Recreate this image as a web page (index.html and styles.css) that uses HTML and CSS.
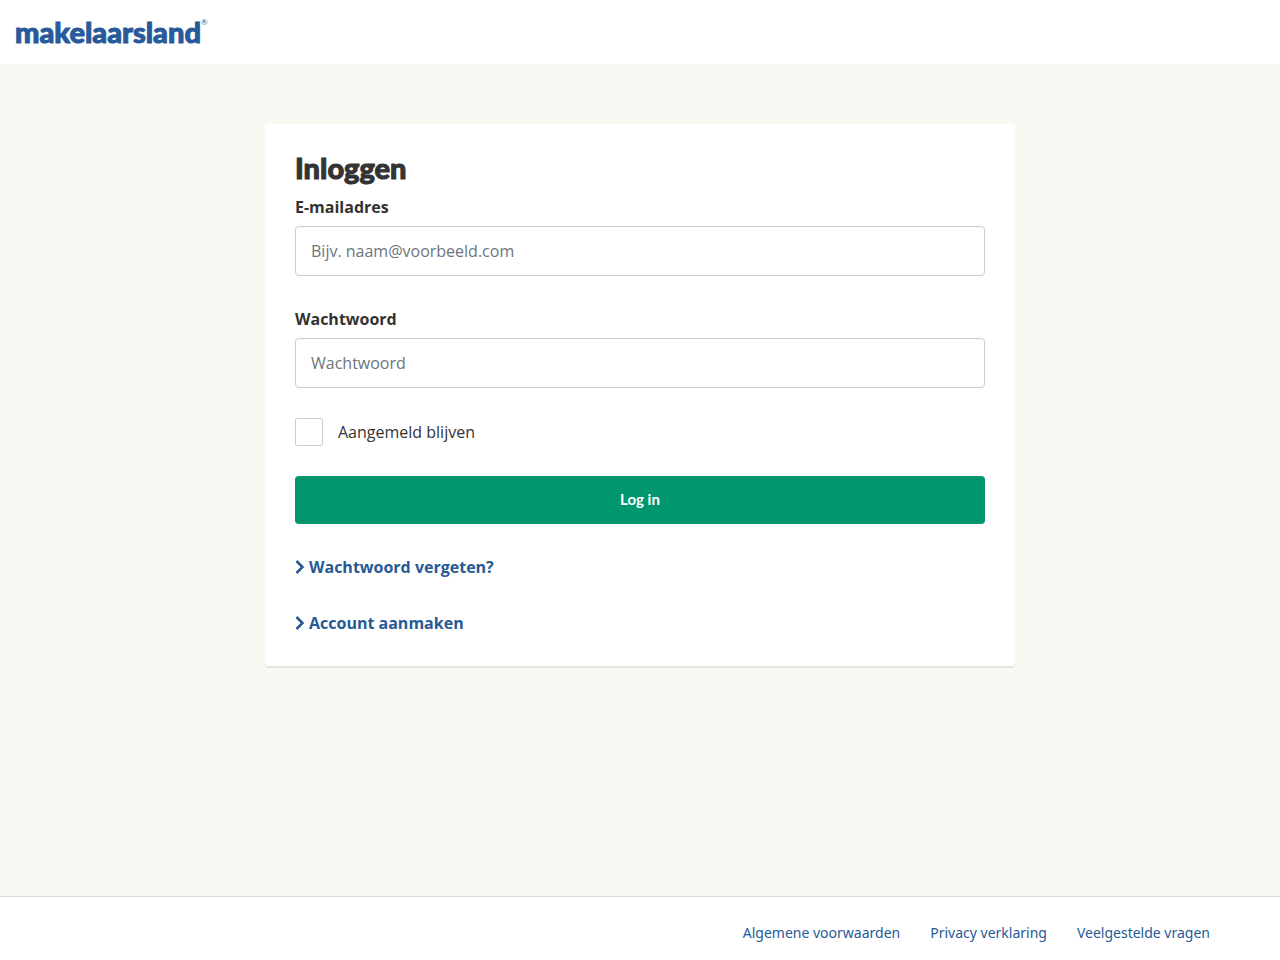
FILE: index.html
```html
<!DOCTYPE html>
<html lang="nl">
<head>
    <meta charset="UTF-8">
    <meta name="viewport" content="width=device-width, initial-scale=1.0">
    <title>Inloggen - Makelaarsland</title>
    <link rel="stylesheet" href="styles.css">
</head>
<body>
    <header class="header">
        <a href="#" class="logo">makelaarsland<sup>®</sup></a>
    </header>

    <main class="main">
        <form class="card">
            <h1>Inloggen</h1>
            <div class="form-group">
                <label for="email">E-mailadres</label>
                <input type="email" id="email" class="form-control" placeholder="Bijv. naam@voorbeeld.com">
            </div>
            <div class="form-group">
                <label for="password">Wachtwoord</label>
                <input type="password" id="password" class="form-control" placeholder="Wachtwoord">
            </div>
            <div class="form-check">
                <input type="checkbox" id="remember">
                <label for="remember">Aangemeld blijven</label>
            </div>
            <button type="submit" class="btn">Log in</button>
            <a href="#" class="link">
                <svg width="10" height="16" viewBox="0 0 10 16" aria-hidden="true"><path d="M1.500 2L7.500 8L1.500 14"/></svg>
                Wachtwoord vergeten?
            </a>
            <a href="#" class="link">
                <svg width="10" height="16" viewBox="0 0 10 16" aria-hidden="true"><path d="M1.500 2L7.500 8L1.500 14"/></svg>
                Account aanmaken
            </a>
        </form>
    </main>

    <footer class="footer">
        <nav class="footer-nav">
            <a href="#">Algemene voorwaarden</a>
            <a href="#">Privacy verklaring</a>
            <a href="#">Veelgestelde vragen</a>
        </nav>
    </footer>
</body>
</html>
```
FILE: styles.css
```css
* {
    box-sizing: border-box;
}
body {
    display: flex;
    flex-direction: column;
    min-height: 100vh;
    margin: 0;
    background-color: #f9f8f3;
    color: #333;
    font-family: "Open Sans", sans-serif;
    font-size: 16px;
    line-height: 26px;
}
a {
    color: #265a96;
    text-decoration: none;
}
a:hover {
    text-decoration: underline;
}
.header {
    display: flex;
    align-items: center;
    height: 64px;
    padding: 0 15px;
    background-color: #fff;
}
.logo {
    display: flex;
    color: #285a9b;
    font-family: Lato, sans-serif;
    font-size: 29px;
    font-weight: 900;
    line-height: 32px;
    -webkit-text-stroke: 1px currentColor;
}
.logo sup {
    font-size: 8px;
    font-weight: 400;
    line-height: 12px;
    -webkit-text-stroke: 0;
}
.main {
    flex: 1;
    padding: 60px 15px;
}
.card {
    display: flex;
    flex-direction: column;
    gap: 30px;
    max-width: 750px;
    margin: 0 auto;
    padding: 30px;
    background-color: #fff;
    border-radius: 4px;
    box-shadow: 0 2px 0 #e4e4df;
}
h1 {
    margin: 0 0 -18px;
    font-family: Lato, sans-serif;
    font-size: 29px;
    font-weight: 900;
    line-height: 28px;
    -webkit-text-stroke: 1px currentColor;
}
.form-group label {
    display: block;
    margin-bottom: 6px;
    font-weight: 700;
}
.form-control {
    display: block;
    width: 100%;
    height: 50px;
    padding: 0 15px;
    border: 1px solid #ccc;
    border-radius: 4px;
    background-color: #fff;
    color: #333;
    font: inherit;
}
.form-control::placeholder {
    color: #6c757d;
    opacity: 1;
}
.form-check {
    display: flex;
    align-items: center;
    gap: 15px;
}
.form-check input {
    appearance: none;
    width: 28px;
    height: 28px;
    margin: 0;
    border: 1px solid #ccc;
    border-radius: 2px;
    background-color: #fff;
}
.form-check input:checked {
    background-color: #00966e;
}
.btn {
    height: 48px;
    padding: 0 15px 2px;
    border: 0;
    border-radius: 4px;
    background-color: #00966e;
    color: #fff;
    font-family: Lato, sans-serif;
    font-size: 15px;
    font-weight: 700;
    cursor: pointer;
}
.btn:hover {
    background-color: #007d5c;
}
.link {
    display: flex;
    align-items: center;
    align-self: flex-start;
    gap: 4px;
    font-weight: 700;
}
.link svg {
    fill: none;
    stroke: currentColor;
    stroke-width: 2.5;
}
.footer {
    padding: 23px 15px 14px;
    border-top: 1px solid #ddd;
    background-color: #fff;
    font-family: "Noto Sans", sans-serif;
    font-size: 14px;
}
.footer-nav {
    display: flex;
    justify-content: flex-end;
    gap: 30px;
    max-width: 1140px;
    margin: 0 auto;
}
```
